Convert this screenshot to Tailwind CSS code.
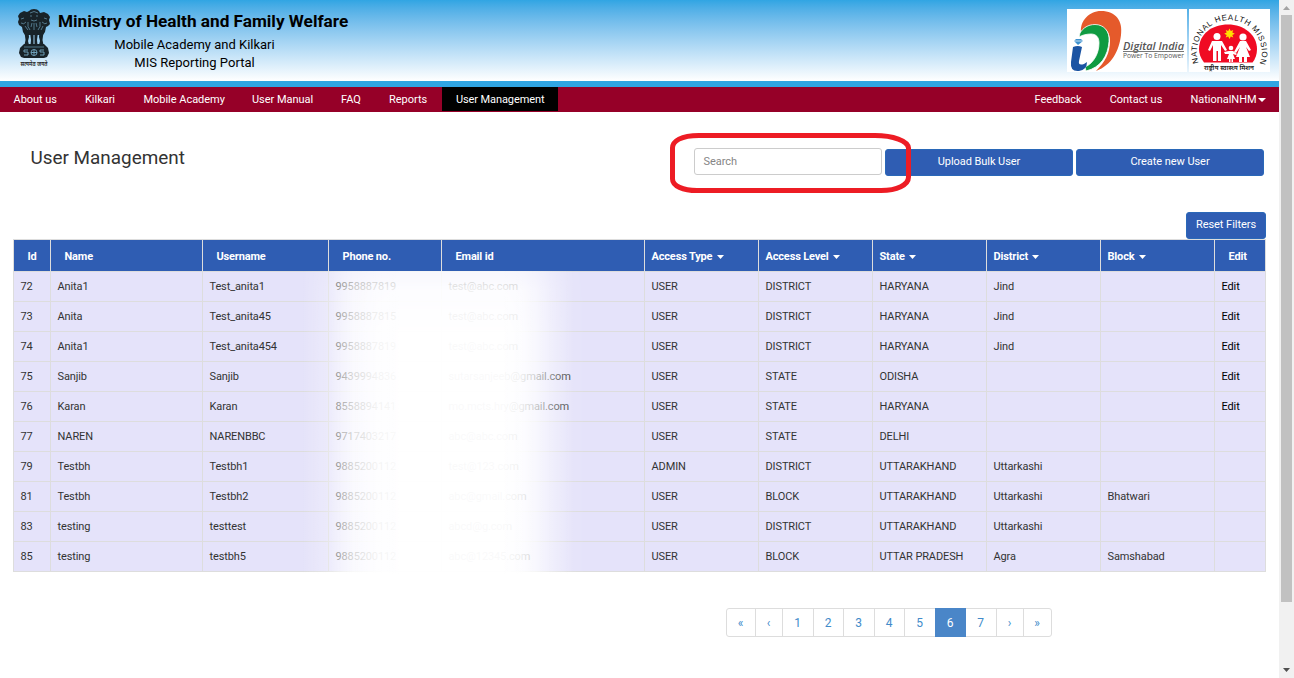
<!DOCTYPE html>
<html lang="en">
<head>
<meta charset="utf-8">
<title>User Management</title>
<script src="https://cdn.jsdelivr.net/npm/@tailwindcss/browser@4"></script>
</head>
<body class="h-[678px] overflow-hidden bg-white font-['Roboto',sans-serif] text-[11px] text-[#333]">
<div class="flex h-[678px] w-[1294px]">
<div class="relative w-[1279px] shrink-0">
  <header class="flex h-[81px] items-start justify-between bg-linear-to-b from-[#30a5e3] to-white pr-[9px] text-black">
    <div class="flex">
      <svg class="ml-[16px] mt-[8px] h-[60px] w-[36px]" viewBox="0 0 36 60">
        <g fill="#182329">
          <path d="M13 3l2-1.500 3-.5 3 .5 2 1.500 1 2 4-1 4 2 2 3-1 3 1 4-2 2-2 1-1 5-2 3H9l-2-3-1-5-3-2-1-3 1-3-1-3 2-3 4-2 3 1z"/>
          <path d="M8.500 24h4l.5 5-1 4 1 4H8.500l1-5zM14 24h3.500v13H14.500l.5-5zM18.500 24H22l-1 8 .5 5h-3zM23.500 24h4l-1 8 1 5H23l1-4-1-4z"/>
          <path d="M8 36h20l4 4 1 5-2 4-3 1H8l-3-1-2-4 1-5z"/>
        </g>
        <g fill="none" stroke="#74a9c4" stroke-width=".9">
          <path d="M14 5q4-3 8 0M14 8h2m4 0h2M15 12q3 2 6 0M5 11l3-1M28 10l3 1M5 15q3 2 5-1M26 14q3 3 5 1M12 14q-1 5 2 8M24 14q1 5-2 8M9 18l3 4M27 18l-2 4M18 15v7M16 15l-1 4M20 15l1 4" opacity=".7"/>
          <path d="M8 39h20" opacity=".7"/>
          <circle cx="18" cy="44.500" r="3"/><path d="M18 41.500v6M15 44.500h6M12 42H8v2h4v3H8M28 42h-4v2h4v3h-4"/>
        </g>
        <text x="18" y="57.500" font-size="6" font-weight="600" textLength="27" lengthAdjust="spacingAndGlyphs" text-anchor="middle" fill="#222" font-family="Noto Sans Devanagari, Noto Sans, sans-serif">सत्यमेव जयते</text>
      </svg>
      <div class="ml-[6px] mt-[10px]">
        <div class="text-[17.200px] leading-[22px] font-bold whitespace-nowrap">Ministry of Health and Family Welfare</div>
        <div class="mt-[3.500px] w-[273px] text-center text-[13px] leading-[18px]">Mobile Academy and Kilkari</div>
        <div class="w-[273px] text-center text-[13px] leading-[18px] tracking-[0.02px]">MIS Reporting Portal</div>
      </div>
    </div>
    <div class="mt-[9px] flex gap-[2px]">
      <svg class="h-[63px] w-[120px] bg-white" viewBox="0 0 120 63">
        <path d="M14 23C13 12 22 2 34 2c15 0 22 10 20 24-2 16-9 30-25 36 9-9 14-18 14-30 0-10-6-16-15-16-6 0-10 2-14 7z" fill="#e55a2b"/>
        <path d="M13 24c3-5 8-8.500 15-8.500 9 0 15 7 14 17-1 14-8 26-23 29.500l-1-4c9-4 14-14 14-24 0-6-3-9-8-9-4 0-9 1-12 3z" fill="#0f9b41" stroke="#fff" stroke-width=".8"/>
        <path d="M6 38q5-2 9 0l-3 14q-1 5 5 3l3-2q0 8-8 9-9 1-8-9z" fill="#1b54a3"/>
        <path d="M11 36l-4-4 2-2h5l2 2z" fill="#3c91cf"/>
        <path d="M7 32h9" stroke="#fff" stroke-width=".7"/>
        <text x="56" y="40.500" font-size="11" font-style="italic" font-weight="600" textLength="61" lengthAdjust="spacingAndGlyphs" fill="#555" font-family="Open Sans, sans-serif">Digital India</text>
        <path d="M56 42.500h61" stroke="#777" stroke-width="1"/>
        <text x="56" y="48.500" font-size="6.500" textLength="61" lengthAdjust="spacingAndGlyphs" fill="#555" font-family="Open Sans, sans-serif">Power To Empower</text>
      </svg>
      <svg class="h-[63px] w-[81px] bg-white" viewBox="0 0 81 63">
        <defs><path id="arc" d="M9.500 54A32.500 32.500 0 1 1 71 54"/></defs>
        <path d="M15 53.500Q10 47 10 40C10 25 23 15.500 39 15.500S68 26 68 40q0 8-4.500 13.500z" fill="#f00b23"/>
        <text font-size="8" fill="#111" font-family="Liberation Sans, sans-serif"><textPath href="#arc" textLength="124" lengthAdjust="spacing">NATIONAL HEALTH MISSION</textPath></text>
        <path d="M40.500 19.500l1.300 2.500 2.500-1-1 2.500 2.500 1.200-2.500 1.300 1 2.500-2.500-1-1.300 2.500-1.300-2.500-2.500 1 1-2.500-2.500-1.300 2.500-1.200-1-2.500 2.500 1z" fill="#ffe000"/>
        <g fill="#fff">
          <circle cx="28" cy="27.500" r="3.500"/><circle cx="54" cy="28" r="3.600"/><circle cx="42" cy="39" r="2.300"/>
          <path d="M23 32h10l5 9-2 1-4-6v16h-3V42h-1.500v10H24V36l-3 6-2-1z"/>
          <path d="M51 32h6l5 9-2 1-3-4 4 10h-3v5h-3v-5h-2v5h-3v-5h-3l4-10-4 6-2-1z"/>
          <path d="M40 42h4l4 3-1 1-3-1 2 5h-2v3h-1.500v-3h-1v3H40v-3h-2l2-5-4 0-1-2z"/>
        </g>
        <text x="40" y="60.500" text-anchor="middle" font-size="6" font-weight="600" textLength="50" lengthAdjust="spacingAndGlyphs" fill="#222" font-family="Noto Sans Devanagari, Noto Sans, sans-serif">राष्ट्रीय स्वास्थ्य मिशन</text>
      </svg>
    </div>
  </header>
  <div class="h-[6px] bg-[#30a5e3]"></div>
  <nav class="flex h-[25px] justify-between bg-[#960028] leading-[25px] tracking-[-0.03px] text-white">
    <div class="flex">
      <a class="w-[71px] pl-[13.500px]">About us</a>
      <a class="w-[59px] pl-[14px]">Kilkari</a>
      <a class="w-[108px] pl-[13.500px]">Mobile Academy</a>
      <a class="w-[89px] pl-[14px]">User Manual</a>
      <a class="w-[48px] pl-[14px]">FAQ</a>
      <a class="w-[67px] pl-[14px]">Reports</a>
      <a class="h-[24px] w-[116px] bg-black pl-[14px] tracking-[-0.1px]">User Management</a>
    </div>
    <div class="flex">
      <a class="w-[75px] pl-[.5px]">Feedback</a>
      <a class="w-[81px] pl-[.7px]">Contact us</a>
      <a class="flex w-[89px] gap-[1px] pl-[.5px]">NationalNHM<svg class="mt-[11px] h-[4px] w-[8px]" viewBox="0 0 8 4"><path d="M0 0h8l-4 4z" fill="#fff"/></svg></a>
    </div>
  </nav>
  <div class="flex h-[64px] items-start justify-between pl-[30.500px] pr-[15px]">
    <h1 class="mt-[35px] text-[18.900px] leading-[22px]">User Management</h1>
    <div class="mt-[36px] flex gap-[3px] tracking-[-0.06px]">
      <div class="h-[27px] w-[188px] rounded-[3px] border border-[#ccc] pl-[8.500px] leading-[25px] text-[#858585]">Search</div>
      <div class="mt-px h-[27px] w-[188px] rounded-[3px] border border-[#2a68b8] bg-[#2f5db3] text-center leading-[24px] text-white">Upload Bulk User</div>
      <div class="mt-px h-[27px] w-[188px] rounded-[3px] border border-[#2a68b8] bg-[#2f5db3] text-center leading-[24px] text-white">Create new User</div>
    </div>
  </div>
  <div class="mt-[36px] flex justify-end pr-[13px] tracking-[-0.05px]">
    <div class="h-[27px] w-[80px] rounded-[3px] border border-[#2a68b8] bg-[#2f5db3] text-center leading-[24px] text-white">Reset Filters</div>
  </div>
  <div class="relative ml-[13px] w-[1253px] border-t border-l border-[#ddd]">
    <div class="grid h-[32px] grid-cols-[37px_152px_126px_113px_203px_114px_114px_114px_114px_114px_51px] overflow-hidden border-b border-[#ddd] bg-[#2f5db3] font-bold leading-[33px] tracking-[-0.16px] text-white [&>div]:border-r [&>div]:border-[#ddd]">
      <div class="pl-[13.500px]">Id</div><div class="pl-[13.500px]">Name</div><div class="pl-[13.500px]">Username</div><div class="pl-[13.500px]">Phone no.</div><div class="pl-[13.500px]">Email id</div>
      <div class="flex gap-[5px] pl-[6.500px]">Access Type<svg class="mt-[15px] h-[4px] w-[7px]" viewBox="0 0 7 4"><path d="M0 0h7l-3.500 4z" fill="#fff"/></svg></div>
      <div class="flex gap-[4px] pl-[6.500px]">Access Level<svg class="mt-[15px] h-[4px] w-[7px]" viewBox="0 0 7 4"><path d="M0 0h7l-3.500 4z" fill="#fff"/></svg></div>
      <div class="flex gap-[4px] pl-[6.500px]">State<svg class="mt-[15px] h-[4px] w-[7px]" viewBox="0 0 7 4"><path d="M0 0h7l-3.500 4z" fill="#fff"/></svg></div>
      <div class="flex gap-[4px] pl-[6.500px]">District<svg class="mt-[15px] h-[4px] w-[7px]" viewBox="0 0 7 4"><path d="M0 0h7l-3.500 4z" fill="#fff"/></svg></div>
      <div class="flex gap-[5px] pl-[6.500px]">Block<svg class="mt-[15px] h-[4px] w-[7px]" viewBox="0 0 7 4"><path d="M0 0h7l-3.500 4z" fill="#fff"/></svg></div>
      <div class="pl-[13.500px]">Edit</div>
    </div>
    <div id="rows" class="bg-[#e5e3fa]"></div>
    <div class="absolute top-[31px] left-[287px] h-[303px] w-[290px] bg-[linear-gradient(90deg,#fff0_0%,#fff4_9%,#fff9_14%,#fffc_18%,#fffffff0_26%,#fffffff8_34%,#fffffff8_70%,#ffffffe8_76%,#fffb_81%,#fff6_87%,#fff1_94%,#fff0_100%)] [mask-image:linear-gradient(180deg,#000b_0,#000e_20px,#000_60px)]"></div>
  </div>
  <div class="mt-[36px] ml-[726px] flex h-[29px] w-[326px] text-[12px] leading-[28px] text-[#428bca] [&>a]:-mr-px [&>a]:border [&>a]:border-[#ddd] [&>a]:pr-px [&>a]:text-center">
    <a class="w-[30px] rounded-l-[3px]">«</a><a class="w-[28px]">‹</a><a class="w-[32px]">1</a><a class="w-[31px]">2</a><a class="w-[32px]">3</a><a class="w-[31px]">4</a><a class="w-[32px]">5</a><a class="z-10 w-[31px] border-[#4a86c8]! bg-[#4a86c8] text-white">6</a><a class="w-[32px]">7</a><a class="w-[28px]">›</a><a class="w-[29px] rounded-r-[3px]">»</a>
  </div>
  <svg class="absolute top-[130px] left-[667px] h-[66px] w-[248px]" viewBox="0 0 248 66"><path d="M32 5.500H208C226 5.500 241 11 241.500 18V47C241.500 55 230 60.500 214 60.500H30C16 60.500 5.500 56 5.500 49V18C5.500 11 14 5.500 32 5.500Z" fill="none" stroke="#ed1c24" stroke-width="5"/></svg>
</div>
<div class="flex w-[15px] flex-col items-center bg-[#f1f1f1]">
  <svg class="mt-[6px] h-[4px] w-[7px]" viewBox="0 0 7 4"><path d="M0 4h7l-3.500-4z" fill="#a3a3a3"/></svg>
  <div class="mt-[5px] h-[587px] w-[11px] bg-[#c1c1c1]"></div>
  <svg class="mt-auto mb-[6px] h-[4px] w-[7px]" viewBox="0 0 7 4"><path d="M0 0h7l-3.500 4z" fill="#505050"/></svg>
</div>
</div>
<script>
const data = [
["72","Anita1","Test_anita1","9958887819","test@abc.com","USER","DISTRICT","HARYANA","Jind","","Edit"],
["73","Anita","Test_anita45","9958887815","test@abc.com","USER","DISTRICT","HARYANA","Jind","","Edit"],
["74","Anita1","Test_anita454","9958887819","test@abc.com","USER","DISTRICT","HARYANA","Jind","","Edit"],
["75","Sanjib","Sanjib","9439994836","sutarsanjeeb@gmail.com","USER","STATE","ODISHA","","","Edit"],
["76","Karan","Karan","8558894141","mo.mcts.hry@gmail.com","USER","STATE","HARYANA","","","Edit"],
["77","NAREN","NARENBBC","9717403217","abc@abc.com","USER","STATE","DELHI","","",""],
["79","Testbh","Testbh1","9885200112","test@123.com","ADMIN","DISTRICT","UTTARAKHAND","Uttarkashi","",""],
["81","Testbh","Testbh2","9885200112","abc@gmail.com","USER","BLOCK","UTTARAKHAND","Uttarkashi","Bhatwari",""],
["83","testing","testtest","9885200112","abcd@g.com","USER","DISTRICT","UTTARAKHAND","Uttarkashi","",""],
["85","testing","testbh5","9885200112","abc@12345.com","USER","BLOCK","UTTAR PRADESH","Agra","Samshabad",""]];
document.getElementById("rows").innerHTML = data.map(r =>
 '<div class="grid h-[30px] grid-cols-[37px_152px_126px_113px_203px_114px_114px_114px_114px_114px_51px] leading-[28px] tracking-[-0.12px] whitespace-nowrap">' +
 r.map((c,i) => '<div class="border-r border-b border-[#ddd] pt-px pl-[6.500px]' + (i === 10 ? ' text-black' : '') + '">' + c + '</div>').join('') + '</div>').join('');
</script>
</body>
</html>
